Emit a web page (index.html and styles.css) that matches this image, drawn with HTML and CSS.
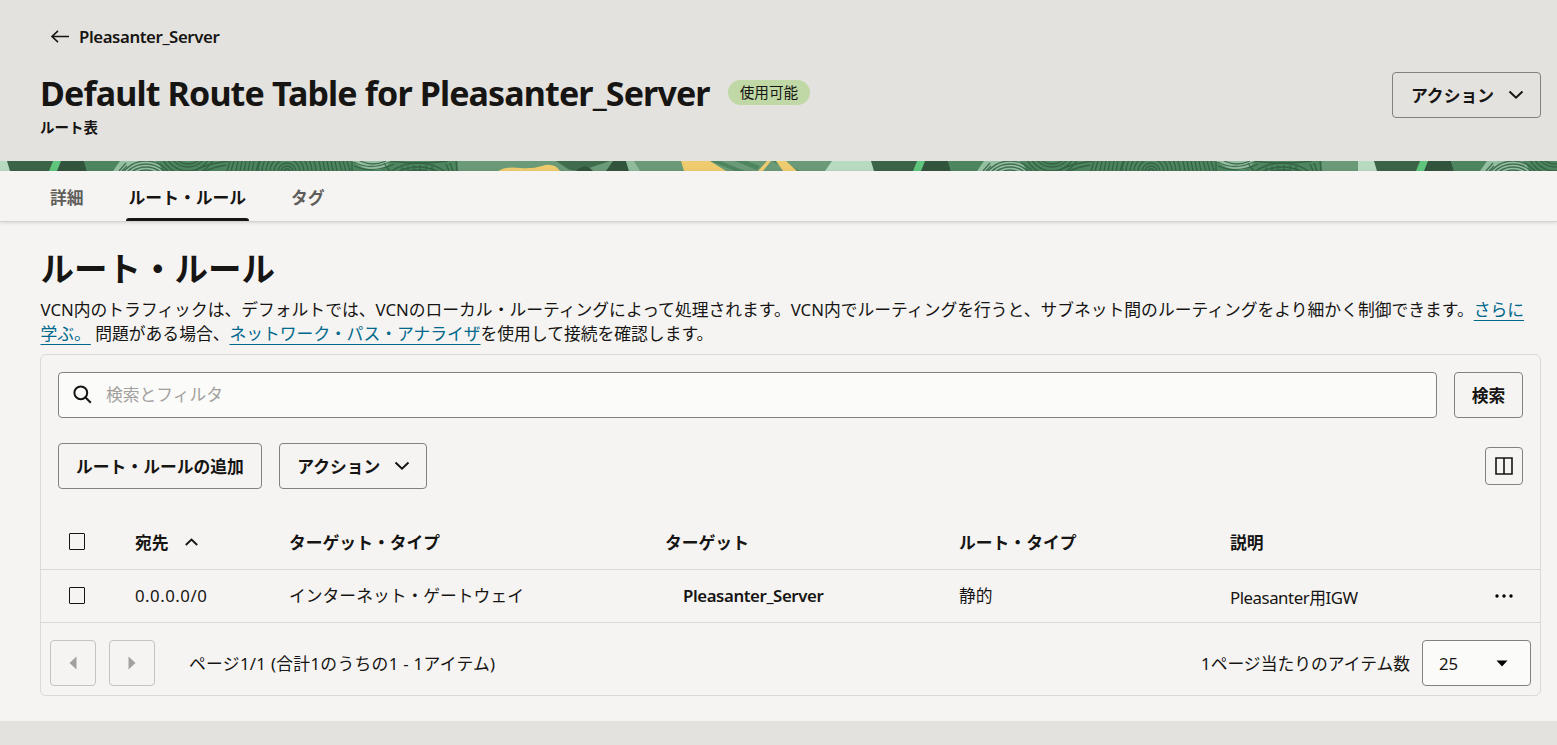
FILE: index.html
```html
<!DOCTYPE html>
<html lang="ja">
	<head>
		<meta charset="utf-8">
		<title>Default Route Table for Pleasanter_Server</title>
		<meta name="viewport" content="width=device-width">
		<link rel="stylesheet" href="styles.css">
	</head>
	<body>
		<header>
			<a href="#" class="back">
				<svg width="20" height="14" viewBox="0 0 20 14"><path d="M8 0.8 L2 6.5 L8 12.2 M2 6.5 H19" /></svg>
				<span>Pleasanter_Server</span>
			</a>
			<div class="title-row">
				<div>
					<div class="title">
						<h1>Default Route Table for Pleasanter_Server</h1>
						<span class="badge">使用可能</span>
					</div>
					<p class="subtitle">ルート表</p>
				</div>
				<button class="btn menu">アクション
					<svg width="16" height="10" viewBox="0 0 16 10"><path d="M1.5 1.5 L8 7.7 L14.5 1.5" /></svg>
				</button>
			</div>
		</header>

		<svg class="banner" width="1557" height="10" viewBox="0 0 1557 10">
			<defs>
				<clipPath id="rings"><rect x="117" width="341" height="10" /></clipPath>
				<g id="strip">
					<path fill="#b7dac1" d="M-32 0 H8 L13 10 H-39 Z" />
					<path fill="#3b6347" d="M7 0 H58 L52 10 H10 Z" />
					<path fill="#32543c" d="M60 0 H84 L87 10 H56 Z" />
					<path fill="#5fc57c" d="M53 0 H61 L57 10 H49 Z" />
					<path fill="#4d855e" d="M84 0 H458 V10 H87 Z" />
					<path fill="#94c0a1" d="M120 0 H155 Q161 4 162 10 H113 Z" />
					<path fill="#94c0a1" d="M352 0 H391 Q384 10 373 9 Q360 7 352 0 Z" />
					<g clip-path="url(#rings)" fill="none" stroke="#2f5c40" stroke-width="1.3" opacity="0.8">
						<circle cx="146" cy="29" r="20" /><circle cx="146" cy="29" r="23" />
						<circle cx="146" cy="29" r="26" /><circle cx="146" cy="29" r="29" />
						<path d="M119 10 L126 2 M122 10 L127 5" />
						<circle cx="188" cy="-14" r="17" /><circle cx="188" cy="-14" r="20" />
						<circle cx="188" cy="-14" r="24" />
						<circle cx="188" cy="-14" r="28" />
						<path d="M195 10 Q204 4 217 2 L228 0 M205 10 Q214 6 226 4" />
						<path d="M230 0 L227 10 M234 0 L231 10 M238 0 L236 10 M242 0 L240 10 M246 0 L244 10 M250 0 L248 10 M254 0 L252 10 M259 0 L256 10" />
						<circle cx="287" cy="11" r="3" /><circle cx="287" cy="11" r="6" />
						<circle cx="287" cy="11" r="9" /><circle cx="287" cy="11" r="13" />
						<circle cx="287" cy="11" r="17" /><circle cx="287" cy="11" r="21" />
						<circle cx="287" cy="11" r="25" /><circle cx="287" cy="11" r="29" />
						<path d="M319 0 L321 10 M323 0 L325 10 M327 0 L329 10 M331 0 L333 10 M335 0 L337 10 M339 0 L342 10 M343 0 L346 10 M347 0 L350 10 M352 0 V10" />
						<path d="M354 1 Q370 10 390 1 M360 0 Q373 6 386 0 M354 5 Q372 13 394 3" />
						<circle cx="418" cy="48" r="39" /><circle cx="418" cy="48" r="42" />
						<circle cx="418" cy="48" r="46" />
						<path d="M390 0 Q418 4 448 0 M384 2 Q386 6 390 10 M450 2 L453 10 M456 0 L457 10 M446 3 L449 10" />
						<path d="M402 6 V10 M408 5 V10 M414 4 V10 M420 4 V10 M426 4 V10 M432 5 V10" />
					</g>
				</g>
			</defs>
			<rect width="1557" height="10" fill="#6a9a78" />
			<use href="#strip" />
			<path fill="#eecb6e" d="M498 10 Q506 5 520 7 Q533 8 542 5 Q554 1 560 10 Z" />
			<path fill="#3f6c4d" d="M556 0 H610 L592 6 Q578 12 568 8 Z" />
			<path fill="#32543c" d="M576 10 Q585 1 593 10 Z M613 0 H626 L629 10 H606 Z" />
			<path fill="#8fba9b" d="M626 0 H634 L640 10 H629 Z" />
			<path fill="#4d855e" d="M720 0 L745 10 H735 L710 0 Z M735 0 L757 9 L760 5 L747 0 Z M772 0 L790 10 H800 L782 0 Z" />
			<path fill="#eecb6e" d="M681 0 H710 L726 10 H684 Z M767 0 H771 L763 10 H758 Z M776 0 H786 L797 10 H783 Z" />
			<use href="#strip" x="864" />
			<rect x="1358" width="30" height="10" fill="#b7dac1" />
			<svg x="1358" width="199" height="10" viewBox="1358 0 199 10"><use href="#strip" x="1367" /></svg>
		</svg>

		<nav>
			<ul>
				<li><a href="#">詳細</a></li>
				<li><a href="#" class="active">ルート・ルール</a></li>
				<li><a href="#">タグ</a></li>
			</ul>
		</nav>

		<main>
			<h2>ルート・ルール</h2>
			<p class="note">VCN内のトラフィックは、デフォルトでは、VCNのローカル・ルーティングによって処理されます。VCN内でルーティングを行うと、サブネット間のルーティングをより細かく制御できます。<a href="#">さらに<br>学ぶ。</a> 問題がある場合、<a href="#">ネットワーク・パス・アナライザ</a>を使用して接続を確認します。</p>

			<section>
				<div class="search">
					<label>
						<svg width="20" height="20" viewBox="0 0 20 20"><circle cx="7.8" cy="7.8" r="6.4" /><path d="M12.5 12.5 L17.8 17.8" /></svg>
						<input type="text" placeholder="検索とフィルタ">
					</label>
					<button class="btn">検索</button>
				</div>
				<div class="tools">
					<button class="btn">ルート・ルールの追加</button>
					<button class="btn menu">アクション
						<svg width="16" height="10" viewBox="0 0 16 10"><path d="M1.5 1.5 L8 7.7 L14.5 1.5" /></svg>
					</button>
					<button class="btn columns">
						<svg width="18" height="18" viewBox="0 0 18 18"><path d="M1 1 H17 V17 H1 Z M9 1 V17" /></svg>
					</button>
				</div>
				<table>
					<thead>
						<tr>
							<th class="c-check"><span class="check"></span></th>
							<th class="c-dest">宛先 <svg width="13" height="8" viewBox="0 0 13 8"><path d="M0.8 7 L6.5 1.5 L12.2 7" /></svg></th>
							<th class="c-type">ターゲット・タイプ</th>
							<th class="c-target">ターゲット</th>
							<th class="c-route">ルート・タイプ</th>
							<th class="c-desc">説明</th>
							<th></th>
						</tr>
					</thead>
					<tbody>
						<tr>
							<td class="c-check"><span class="check"></span></td>
							<td class="num">0.0.0.0/0</td>
							<td>インターネット・ゲートウェイ</td>
							<td class="target">Pleasanter_Server</td>
							<td>静的</td>
							<td class="desc">Pleasanter用IGW</td>
							<td class="more"><svg width="18" height="4" viewBox="0 0 18 4"><circle cx="2" cy="2" r="1.7" /><circle cx="9" cy="2" r="1.7" /><circle cx="16" cy="2" r="1.7" /></svg></td>
						</tr>
					</tbody>
				</table>
				<div class="pager">
					<button class="page"><svg width="8" height="14" viewBox="0 0 8 14"><path d="M7.5 0.5 V13.5 L0.5 7 Z" /></svg></button>
					<button class="page"><svg width="8" height="14" viewBox="0 0 8 14"><path d="M0.5 0.5 V13.5 L7.5 7 Z" /></svg></button>
					<span class="count">ページ1/1 (合計1のうちの1 - 1アイテム)</span>
					<span class="per">1ページ当たりのアイテム数</span>
					<div class="select"><span>25</span><svg width="12" height="7" viewBox="0 0 12 7"><path d="M0.5 0.5 H11.5 L6 6.5 Z" /></svg></div>
				</div>
			</section>
		</main>
	</body>
</html>
```
FILE: styles.css
```css
* {
	margin: 0px;
	padding: 0px;
	box-sizing: border-box;
}

body {
	height: 745px;
	overflow: hidden;
	background-color: #e4e2de;
	color: #161513;
	font-family: "Noto Sans", "Noto Sans CJK JP", sans-serif;
	font-size: 16.8px;
	line-height: 24px;
}

svg {
	display: block;
	flex: none;
}

header {
	height: 161px;
	padding: 25px 16px 0 40px;
}

.back {
	display: flex;
	align-items: center;
	gap: 9px;
	padding-left: 10px;
	color: #161513;
	font-weight: 600;
	font-size: 16.8px;
	letter-spacing: -0.4px;
	text-decoration: none;
}

.back svg, .menu svg, th svg, .columns svg, .search svg {
	fill: none;
	stroke: #161513;
	stroke-width: 1.6;
}

.title-row {
	display: flex;
	justify-content: space-between;
	align-items: flex-start;
	margin-top: 23px;
}

.title {
	display: flex;
	align-items: center;
	height: 40px;
	gap: 18px;
}

h1 {
	padding-top: 2px;
	font-size: 34px;
	font-weight: 700;
	letter-spacing: -0.87px;
	line-height: 40px;
	white-space: nowrap;
}

.badge {
	height: 25px;
	padding: 0 12px;
	border-radius: 13px;
	background-color: #c0d8a6;
	font-size: 14.6px;
	line-height: 25px;
}

.subtitle {
	margin-top: 3px;
	font-size: 14.5px;
	font-weight: 600;
}

.btn {
	display: flex;
	align-items: center;
	height: 46px;
	padding: 0 17px;
	border: 1px solid #83817e;
	border-radius: 4px;
	background: none;
	color: #161513;
	font-family: inherit;
	font-size: 16.8px;
	font-weight: 700;
	white-space: nowrap;
}

.menu {
	gap: 14px;
	padding-right: 16px;
	padding-left: 17.5px;
}

.menu svg {
	stroke-width: 2;
}

nav {
	position: relative;
	height: 51px;
	padding: 0 47px;
	border-bottom: 1px solid #d4d2cf;
	background-color: #f5f4f2;
	box-shadow: 0 1px 4px rgba(0, 0, 0, 0.12);
}

nav ul {
	display: flex;
	gap: 39px;
	list-style: none;
}

nav a {
	display: block;
	height: 50px;
	padding: 0 3px;
	color: #5f5d5a;
	font-weight: 600;
	line-height: 53px;
	text-decoration: none;
}

nav .active {
	position: relative;
	color: #161513;
}

/*選択中のタブの下線*/
nav .active::after {
	content: "";
	position: absolute;
	right: 0;
	bottom: 0;
	left: 0;
	height: 3px;
	border-radius: 3px 3px 0 0;
	background-color: #161513;
}

main {
	height: 499px;
	padding: 26px 16px 0 40px;
	background-color: #f5f4f2;
}

h2 {
	padding-left: 0.5px;
	font-size: 33.5px;
	line-height: 40px;
}

.note {
	margin-top: 10px;
	padding-left: 0.5px;
	white-space: nowrap;
}

.note a {
	color: #00688c;
	text-decoration: underline 1px;
	text-decoration-skip-ink: none;
	text-underline-offset: 4px;
}

section {
	height: 342px;
	margin-top: 8px;
	border: 1px solid #dbd9d6;
	border-radius: 6px;
}

.search {
	display: flex;
	gap: 17px;
	padding: 17px 17px 0;
}

.search label {
	display: flex;
	align-items: center;
	flex: 1;
	height: 46px;
	gap: 13px;
	padding: 0 14px;
	border: 1px solid #83817e;
	border-radius: 4px;
	background-color: #fbfbf9;
}

.search svg {
	stroke-width: 2;
}

.search .btn {
	justify-content: center;
	width: 69px;
	padding: 0;
}

input {
	flex: 1;
	padding-bottom: 2px;
	border: none;
	outline: none;
	background: none;
	font-family: inherit;
	font-size: 16.8px;
}

input::placeholder {
	color: #a3a19e;
}

.tools {
	display: flex;
	align-items: center;
	gap: 17px;
	padding: 25px 17px 0;
}

.columns {
	justify-content: center;
	width: 38px;
	height: 38px;
	margin-left: auto;
	padding: 0;
}

table {
	width: 100%;
	margin-top: 26px;
	border-collapse: collapse;
	table-layout: fixed;
}

th, td {
	height: 53px;
	border-bottom: 1px solid #dbd9d6;
	text-align: left;
	white-space: nowrap;
}

th {
	height: 54px;
	padding-top: 2px;
}

th svg {
	display: inline-block;
	margin: 0 0 3px 12px;
	stroke-width: 1.8;
}

.c-check {
	width: 94px;
	padding: 0 0 0 28px;
}

.c-dest {
	width: 154px;
}

.c-type {
	width: 376px;
}

.c-target {
	width: 294px;
}

.c-route {
	width: 271px;
}

.c-desc {
	width: 265px;
}

.check {
	display: block;
	width: 16px;
	height: 17px;
	border: 1.5px solid #161513;
	border-radius: 1px;
}

.num {
	letter-spacing: 0.5px;
}

.target {
	padding-left: 18px;
	font-weight: 600;
	letter-spacing: -0.4px;
}

.desc {
	padding-top: 4px;
	letter-spacing: -0.45px;
}

.pager {
	display: flex;
	align-items: center;
	padding: 17px 9px 0;
}

.page {
	display: flex;
	align-items: center;
	justify-content: center;
	width: 46px;
	height: 46px;
	margin-right: 13px;
	border: 1px solid #c5c3c0;
	border-radius: 4px;
	background: none;
	fill: #a3a19e;
}

.count {
	margin-left: 21px;
	padding-top: 3px;
	letter-spacing: 0.3px;
}

.per {
	margin-left: auto;
	padding-top: 3px;
}

.select {
	display: flex;
	align-items: center;
	justify-content: space-between;
	width: 109px;
	height: 46px;
	margin-left: 12px;
	padding: 2px 22px 0 16px;
	border: 1px solid #83817e;
	border-radius: 4px;
	background-color: #fbfbf9;
}
```
